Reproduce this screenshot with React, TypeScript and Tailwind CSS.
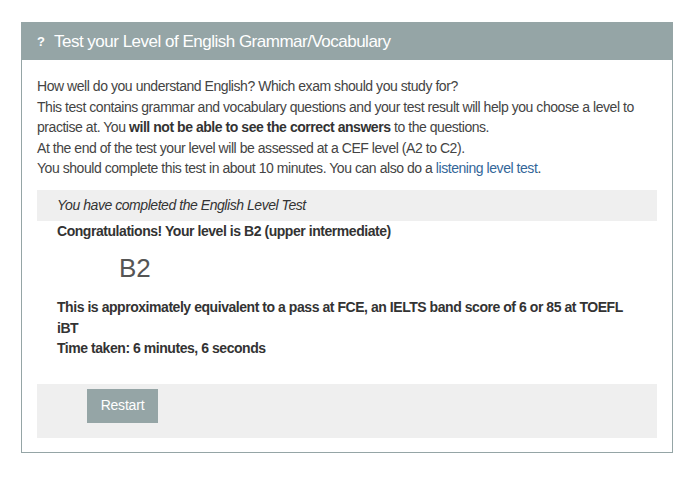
import React from "react";

export default function App() {
  return (
    <div className="min-h-[481px] w-[692px] bg-white pt-[22px] pl-[21px]" style={{ fontFamily: '"Liberation Sans", Arial, sans-serif' }}>
      <div className="w-[652px] border border-[#95a5a6]">
        <div className="flex h-[37px] items-center bg-[#95a5a6] pl-[15px] text-white">
          <span className="mr-[9px] text-[13px] font-bold">?</span>
          <span className="text-[17px] tracking-[-0.5px]">Test your Level of English Grammar/Vocabulary</span>
        </div>
        <div className="px-[15px] pt-[16px] pb-[14px] text-[14px] leading-[20.5px] tracking-[-0.45px] text-[#444]">
          <p>How well do you understand English? Which exam should you study for?</p>
          <p>
            This test contains grammar and vocabulary questions and your test result will help you choose a level to practise at. You{" "}
            <b className="text-[#333]">will not be able to see the correct answers</b> to the questions.
          </p>
          <p>At the end of the test your level will be assessed at a CEF level (A2 to C2).</p>
          <p>
            You should complete this test in about 10 minutes. You can also do a{" "}
            <a className="text-[#336699]">listening level test</a>.
          </p>
          <div className="mt-[11px] flex h-[31px] items-center bg-[#efefef] pl-[20px] italic text-[#333]">
            You have completed the English Level Test
          </div>
          <div className="pl-[20px] pr-[20px] text-[#333]">
            <p className="font-bold">Congratulations! Your level is B2 (upper intermediate)</p>
            <p className="mt-[12px] pl-[62px] text-[26px] leading-[30px] tracking-normal text-[#555]">B2</p>
            <p className="mt-[14px] font-bold">
              This is approximately equivalent to a pass at FCE, an IELTS band score of 6 or 85 at TOEFL iBT
            </p>
            <p className="font-bold">Time taken: 6 minutes, 6 seconds</p>
          </div>
          <div className="mt-[25px] h-[54px] bg-[#efefef] pt-[5px] pl-[50px]">
            <button className="h-[34px] w-[71px] bg-[#95a5a6] text-[14px] tracking-[-0.2px] text-white">Restart</button>
          </div>
        </div>
      </div>
    </div>
  );
}
